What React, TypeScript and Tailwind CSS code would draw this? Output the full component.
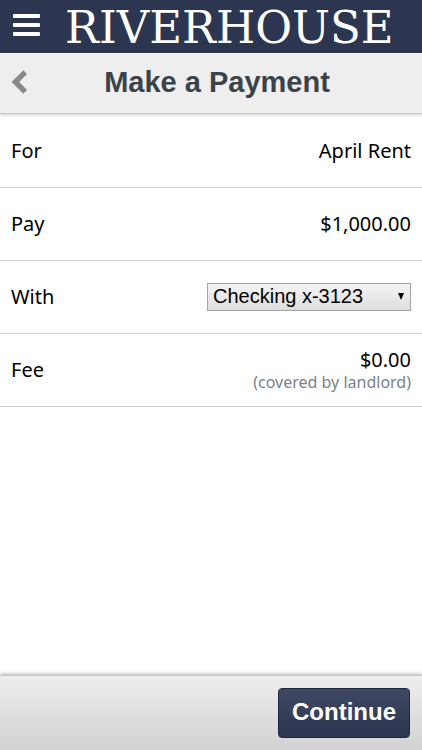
import React from 'react'

const accounts = [{ id: 'checking-3123', label: 'Checking x-3123' }]

const Row = ({
  label,
  htmlFor,
  children,
}: {
  label: string
  htmlFor?: string
  children: React.ReactNode
}) => (
  <div className="flex min-h-[73px] items-center justify-between border-b border-[#d2d2d2] px-[11px]">
    {htmlFor ? <label htmlFor={htmlFor}>{label}</label> : <div>{label}</div>}
    <div className="flex flex-col items-end">{children}</div>
  </div>
)

const App = () => {
  return (
    <div className="flex min-h-screen w-full flex-col bg-white font-['Noto_Sans',sans-serif] text-[20px] leading-6 text-black">
      {/* Brand bar */}
      <header className="flex h-[53px] items-center bg-[#2d3650] text-white">
        <button type="button" aria-label="Menu" className="ml-[13px] cursor-pointer pb-1">
          <svg width="27" height="24" viewBox="0 0 27 24" fill="currentColor">
            <rect y="1" width="27" height="4" rx="1" />
            <rect y="10" width="27" height="4" rx="1" />
            <rect y="19" width="27" height="4" rx="1" />
          </svg>
        </button>
        <div className="ml-[25px] pt-[2px] font-['DejaVu_Serif',serif] text-[45px] leading-[51px]">
          RIVERHOUSE
        </div>
      </header>

      {/* Page title */}
      <div className="z-10 flex h-[61px] items-center border-t border-b border-t-[#f8f8f8] border-b-[#c8cac8] bg-[#eeeeee] px-[11px] pb-1 shadow-[0_1px_3px_rgba(0,0,0,0.2)]">
        <button type="button" aria-label="Back" className="w-4 cursor-pointer text-[#888888]">
          <svg width="16" height="24" viewBox="0 0 16 24" fill="currentColor">
            <path d="M12.3 0.2 16 3.9 8.2 12 16 20.1 12.3 23.8 0.6 12Z" />
          </svg>
        </button>
        <h1 className="flex-1 pr-1 text-center font-['Liberation_Sans',sans-serif] text-[29px] leading-9 font-bold text-[#3a434b]">
          Make a Payment
        </h1>
      </div>

      {/* Payment details */}
      <main className="flex-1 pt-px">
        <Row label="For">April Rent</Row>
        <Row label="Pay">$1,000.00</Row>
        <Row label="With" htmlFor="account">
          <div className="relative">
            <select
              id="account"
              className="h-7 w-[204px] appearance-none border border-[#a5a5a5] bg-linear-to-b from-[#f4f4f4] to-[#dedede] pb-[2px] pl-[5px] font-['Liberation_Sans',sans-serif] text-[20px] leading-6"
            >
              {accounts.map((a) => (
                <option key={a.id} value={a.id}>
                  {a.label}
                </option>
              ))}
            </select>
            <svg
              width="6"
              height="7"
              viewBox="0 0 6 7"
              className="pointer-events-none absolute top-[10px] right-[7px]"
            >
              <path d="M0 0H6L3 7Z" />
            </svg>
          </div>
        </Row>
        <Row label="Fee">
          <div className="leading-6">$0.00</div>
          <div className="text-[16px] leading-5 text-[#7b8289]">(covered by landlord)</div>
        </Row>
      </main>

      {/* Action bar */}
      <footer className="flex h-[75px] items-center justify-end border-t border-[#c6c6c6] bg-linear-to-b from-[#eeeeee] to-[#d2d2d2] px-3 shadow-[0_-1px_4px_rgba(0,0,0,0.3)]">
        <button
          type="button"
          className="h-[50px] cursor-pointer rounded-[4px] border border-[#1f2740] bg-linear-to-b from-[#404963] to-[#2d3650] px-[13px] pb-[2px] font-['Liberation_Sans',sans-serif] text-[24px] font-bold text-white"
        >
          Continue
        </button>
      </footer>
    </div>
  )
}

export default App
